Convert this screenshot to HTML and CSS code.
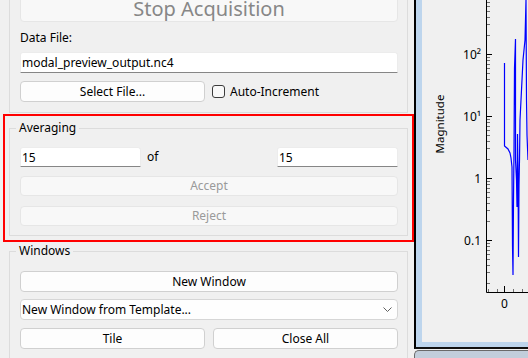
FILE: index.html
```html
<!DOCTYPE html>
<html lang="en">
<head>
    <meta charset="UTF-8">
    <meta name="viewport" content="width=device-width, initial-scale=1.0">
    <title>Acquisition</title>
    <link rel="stylesheet" href="styles.css">
</head>
<body>
    <div class="left-pane">
        <div class="group acq-group">
            <button class="btn btn-stop" disabled>Stop Acquisition</button>
            <div class="field-label">Data File:</div>
            <input class="line-edit" type="text" value="modal_preview_output.nc4">
            <div class="two-col">
                <button class="btn">Select File...</button>
                <label class="check"><span class="check-box"></span>Auto-Increment</label>
            </div>
        </div>

        <div class="highlight">
            <fieldset class="group averaging">
                <legend>Averaging</legend>
                <div class="avg-row">
                    <input class="line-edit" type="text" value="15">
                    <span class="of-label">of</span>
                    <input class="line-edit" type="text" value="15">
                </div>
                <button class="btn btn-accept" disabled>Accept</button>
                <button class="btn btn-reject" disabled>Reject</button>
            </fieldset>
        </div>

        <fieldset class="group windows">
            <legend>Windows</legend>
            <button class="btn">New Window</button>
            <div class="combo">
                <span>New Window from Template...</span>
                <svg class="chevron" width="9" height="5" viewBox="0 0 9 5"><path d="M0.5 0.5 L4.5 4.5 L8.5 0.5" fill="none" stroke="#606060"/></svg>
            </div>
            <div class="two-col">
                <button class="btn">Tile</button>
                <button class="btn">Close All</button>
            </div>
        </fieldset>
    </div>

    <div class="mdi-area">
        <div class="subwin">
            <div class="subwin-frame">
                <svg class="plot" width="106" height="342" viewBox="422 0 106 342">
                    <path d="M486.5 0 V292.5 H528" fill="none" stroke="#000"/>
                    <!-- major ticks -->
                    <path d="M487 54.5h5M487 116.5h5M487 178.5h5M487 240.5h5M504.5 292v-6" stroke="#000"/>
                    <!-- minor ticks -->
                    <path d="M487 35.5h3M487 24.5h3M487 17.5h3M487 11.5h3M487 6.5h3M487 2.5h3
                             M487 97.5h3M487 86.5h3M487 79.5h3M487 73.5h3M487 68.5h3M487 64.5h3M487 60.5h3M487 57.5h3
                             M487 159.5h3M487 148.5h3M487 141.5h3M487 135.5h3M487 130.5h3M487 126.5h3M487 122.5h3M487 119.5h3
                             M487 221.5h3M487 210.5h3M487 203.5h3M487 197.5h3M487 192.5h3M487 188.5h3M487 184.5h3M487 181.5h3
                             M487 283.5h3M487 272.5h3M487 265.5h3M487 259.5h3M487 254.5h3M487 250.5h3M487 246.5h3M487 243.5h3
                             M488.5 292v-3M497.5 292v-3M513.5 292v-3M522.5 292v-3" stroke="#707070"/>
                    <g class="tick-label" text-anchor="end">
                        <text x="481" y="59">10²</text>
                        <text x="481" y="121">10¹</text>
                        <text x="481" y="183">1</text>
                        <text x="481" y="245">0.1</text>
                    </g>
                    <text class="tick-label" x="504.5" y="308" text-anchor="middle">0</text>
                    <text class="axis-title" transform="translate(444 124) rotate(-90)" text-anchor="middle">Magnitude</text>
                    <path d="M504.5 63 V146 L508 149 L510 153 L511 158 L512 167 L512.5 246 L513 275 L513.5 200 L514 150 L514.5 68 L515.5 39 L515.5 160 L516.5 180 L517 207 L517.5 134 L518 170 L518.5 257 L519 185 L519.5 160 L520 120 L521 100 L522 80 L523 60 L524 50 L525 40 L526 0 L526.5 100 L527 135 L528 160"
                          fill="none" stroke="#0000ff" stroke-width="1.2"/>
                </svg>
            </div>
        </div>
        <div class="subwin-next"></div>
    </div>
</body>
</html>
```

FILE: styles.css
```css
body {
    margin: 0;
    padding: 0;
    height: 358px;
    overflow: hidden;
    display: flex;
    background-color: #f0f0f0;
    font-family: 'Noto Sans', sans-serif;
    font-size: 12px;
    line-height: 16px;
    color: #000;
}
.left-pane {
    width: 414px;
    flex-shrink: 0;
}
.group {
    box-sizing: border-box;
    width: 399px;
    border: 1px solid #dcdcdc;
    margin: 0;
    min-width: 0;
}
.group legend {
    padding: 0 3px;
    margin-left: -4px;
    line-height: 16px;
}
.acq-group {
    margin: -6px 0 0 9px;
    padding: 0 9px 10px 10px;
}
.field-label {
    margin-top: 8px;
}
.line-edit {
    display: block;
    box-sizing: border-box;
    width: 100%;
    height: 21px;
    margin: 6px 0 0 0;
    padding: 0 1px;
    border: 1px solid #ececec;
    border-bottom-color: #868686;
    border-radius: 3px 3px 0 0;
    background-color: #fff;
    font: inherit;
    color: #000;
    outline: none;
}
.btn {
    display: block;
    box-sizing: border-box;
    width: 100%;
    height: 21px;
    padding: 0;
    border: 1px solid #d0d0d0;
    border-radius: 4px;
    background-color: #fdfdfd;
    font: inherit;
    color: #000;
}
.btn:disabled {
    background-color: #f8f8f8;
    border-color: #e6e6e6;
    color: #9a9a9a;
}
.btn-stop {
    height: 27px;
    font-size: 20px;
    line-height: 24px;
}
.btn-stop:disabled {
    color: #878787;
}
.two-col {
    display: grid;
    grid-template-columns: 1fr 1fr;
    column-gap: 8px;
    margin-top: 8px;
    height: 21px;
}
.check {
    display: flex;
    align-items: center;
}
.check-box {
    box-sizing: border-box;
    width: 13px;
    height: 13px;
    margin: 0 5px 0 -1px;
    border: 1px solid #3c3c3c;
    border-radius: 3px;
    background-color: #f9f9f9;
}
.highlight {
    box-sizing: border-box;
    width: 411px;
    margin: 1px 0 0 3px;
    padding: 4px;
    border: 2px solid #ff0000;
}
.averaging {
    padding: 11px 9px 9px 10px;
}
.avg-row {
    display: grid;
    grid-template-columns: 121px 1fr 121px;
    column-gap: 6px;
    align-items: center;
    height: 20px;
}
.avg-row .line-edit {
    height: 20px;
    margin: 0;
}
.btn-accept {
    height: 20px;
    margin-top: 9px;
}
.btn-reject {
    height: 20px;
    margin-top: 10px;
}
.windows {
    margin: 1px 0 0 9px;
    padding: 12px 9px 10px 10px;
}
.combo {
    box-sizing: border-box;
    height: 21px;
    margin-top: 7px;
    padding: 0 5px 0 1px;
    display: flex;
    align-items: center;
    justify-content: space-between;
    border: 1px solid #d6d6d6;
    border-radius: 4px;
    background-color: #fefefe;
}
.mdi-area {
    flex-grow: 1;
    display: flex;
    flex-direction: column;
}
.subwin {
    border-left: 2px solid #000;
    border-bottom: 2px solid #111;
}
.subwin-frame {
    height: 342px;
    border-left: 6px solid #bdd5ed;
    border-bottom: 5px solid #bdd5ed;
    background-color: #f0f0f0;
    overflow: hidden;
}
.plot {
    display: block;
}
.tick-label, .axis-title {
    font-family: 'Noto Sans', sans-serif;
    font-size: 12px;
    fill: #000;
}
.axis-title {
    font-size: 11.5px;
}
.subwin-next {
    margin-top: 1px;
    flex-grow: 1;
    border-top: 1px solid #6a6a6a;
    border-left: 1px solid #6a6a6a;
    border-top-left-radius: 5px;
    background-color: #c2cedb;
}
```
